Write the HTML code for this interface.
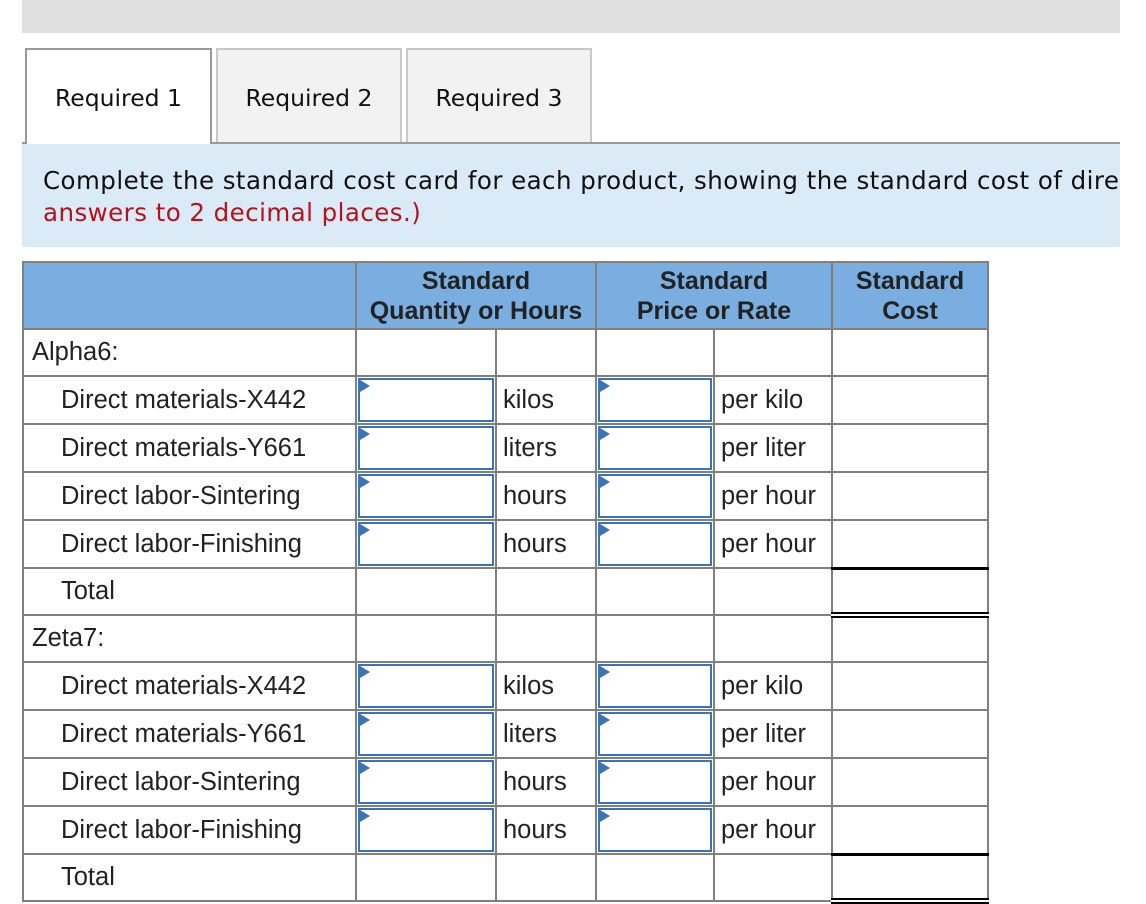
<!DOCTYPE html>
<html><head><meta charset="utf-8"><style>
body{margin:0;width:1146px;height:902px;background:#fff;overflow:hidden;position:relative;font-family:"Liberation Sans",Arial,sans-serif;}
.bar{position:absolute;left:22px;top:0;width:1098px;height:33px;background:#e0e0e0;}
.tab{position:absolute;top:48px;height:94px;box-sizing:border-box;font-family:"DejaVu Sans",Verdana,sans-serif;font-size:23.5px;color:#111;text-align:center;line-height:96px;}
.t1{left:25px;width:187px;background:#fff;border:2px solid #999;border-bottom:none;height:96px;z-index:2}
.t2{left:216px;width:186px;background:#f2f2f2;border:2px solid #c8c8c8;border-bottom:none}
.t3{left:406px;width:186px;background:#f2f2f2;border:2px solid #c8c8c8;border-bottom:none}
.line{position:absolute;left:22px;top:142px;width:1098px;height:2px;background:#999;}
.info{position:absolute;left:22px;top:144px;width:1098px;height:103px;background:#dbeaf7;font-family:"DejaVu Sans",Verdana,sans-serif;font-size:24.5px;letter-spacing:0.45px;color:#111;white-space:nowrap;overflow:hidden;}
.info div{position:absolute;left:21px;}
table{position:absolute;left:22px;top:261px;border-collapse:collapse;table-layout:fixed;font-size:25.5px;color:#222;}
td{border:2px solid #808080;padding:0;height:47px;box-sizing:border-box;position:relative;white-space:nowrap;}
th{background:#7aaee0;border:2px solid #808080;font-weight:bold;font-size:25px;line-height:30px;height:65px;color:#222;padding:0;}
.l1{padding-left:8px}.l2{padding-left:37px}
.u{padding-left:6px}
.in{padding:1px}
.in div{height:44px;border:2px solid #3b73b9;box-sizing:border-box;position:relative;}
.in div:before{content:"";position:absolute;left:0;top:0;border-left:10px solid #3b73b9;border-top:6px solid transparent;border-bottom:6px solid transparent;}
.tt{border-top:3px solid #000;border-bottom:6px double #000;}
</style></head><body>
<div class="bar"></div>
<div class="tab t1">Required 1</div>
<div class="tab t2">Required 2</div>
<div class="tab t3">Required 3</div>
<div class="line"></div>
<div class="info"><div style="top:22px">Complete the standard cost card for each product, showing the standard cost of direct materials and direct labor. (Round your</div><div style="top:54px;color:#b5121b">answers to 2 decimal places.)</div></div>
<table>
<colgroup><col style="width:333px"><col style="width:140px"><col style="width:100px"><col style="width:118px"><col style="width:118px"><col style="width:156px"></colgroup>
<tr><th></th><th colspan="2">Standard<br>Quantity or Hours</th><th colspan="2">Standard<br>Price or Rate</th><th>Standard<br>Cost</th></tr>
<tr><td class="l1">Alpha6:</td><td></td><td></td><td></td><td></td><td></td></tr>
<tr style="height:48px"><td class="l2">Direct materials-X442</td><td class="in"><div></div></td><td class="u">kilos</td><td class="in"><div></div></td><td class="u">per kilo</td><td></td></tr>
<tr style="height:48px"><td class="l2">Direct materials-Y661</td><td class="in"><div></div></td><td class="u">liters</td><td class="in"><div></div></td><td class="u">per liter</td><td></td></tr>
<tr style="height:48px"><td class="l2">Direct labor-Sintering</td><td class="in"><div></div></td><td class="u">hours</td><td class="in"><div></div></td><td class="u">per hour</td><td></td></tr>
<tr style="height:48px"><td class="l2">Direct labor-Finishing</td><td class="in"><div></div></td><td class="u">hours</td><td class="in"><div></div></td><td class="u">per hour</td><td></td></tr>
<tr><td class="l2">Total</td><td></td><td></td><td></td><td></td><td class="tt"></td></tr>
<tr><td class="l1">Zeta7:</td><td></td><td></td><td></td><td></td><td></td></tr>
<tr style="height:48px"><td class="l2">Direct materials-X442</td><td class="in"><div></div></td><td class="u">kilos</td><td class="in"><div></div></td><td class="u">per kilo</td><td></td></tr>
<tr style="height:48px"><td class="l2">Direct materials-Y661</td><td class="in"><div></div></td><td class="u">liters</td><td class="in"><div></div></td><td class="u">per liter</td><td></td></tr>
<tr style="height:48px"><td class="l2">Direct labor-Sintering</td><td class="in"><div></div></td><td class="u">hours</td><td class="in"><div></div></td><td class="u">per hour</td><td></td></tr>
<tr style="height:48px"><td class="l2">Direct labor-Finishing</td><td class="in"><div></div></td><td class="u">hours</td><td class="in"><div></div></td><td class="u">per hour</td><td></td></tr>
<tr><td class="l2">Total</td><td></td><td></td><td></td><td></td><td class="tt"></td></tr>
</table>
</body></html>
